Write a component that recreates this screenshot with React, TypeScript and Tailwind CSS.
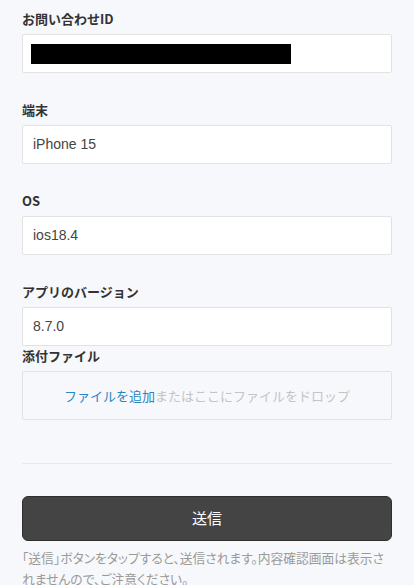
export default function App() {
  const fields = [
    { label: 'お問い合わせID', value: null },
    { label: '端末', value: 'iPhone 15' },
    { label: 'OS', value: 'ios18.4' },
  ]

  return (
    <div
      className="min-h-[585px] bg-[#f7f8fb] px-[22px] pt-[10px] text-[#333]"
      style={{ fontFamily: '"Noto Sans CJK JP", "Liberation Sans", sans-serif' }}
    >
      {fields.map((f) => (
        <div key={f.label} className="mb-[28px]">
          <p className="h-[18px] text-[13px] leading-[18px] font-bold text-[#333] mb-[6px]">{f.label}</p>
          <div className="h-[39px] bg-white border border-[#e2e2e2] rounded-[2px] flex items-center px-[10px]">
            {f.value === null ? (
              <div className="h-[20px] w-[260px] bg-black -ml-[2px]" />
            ) : (
              <span className="text-[14px] text-[#444]" style={{ fontFamily: '"Liberation Sans", "Noto Sans CJK JP", sans-serif' }}>
                {f.value}
              </span>
            )}
          </div>
        </div>
      ))}

      <p className="h-[18px] text-[13px] leading-[18px] font-bold mb-[6px]">アプリのバージョン</p>
      <div className="h-[39px] bg-white border border-[#e2e2e2] rounded-[2px] flex items-center px-[10px]">
        <span className="text-[14px] text-[#444]" style={{ fontFamily: '"Liberation Sans", "Noto Sans CJK JP", sans-serif' }}>
          8.7.0
        </span>
      </div>

      <p className="h-[18px] mt-[1px] text-[13px] leading-[18px] font-bold mb-[6px]">添付ファイル</p>
      <div className="h-[49px] border border-[#e2e2e2] rounded-[2px] flex items-center justify-center text-[13px]">
        <span className="text-[#2b86bf]">ファイルを追加</span>
        <span className="text-[#c4c4c4]">またはここにファイルをドロップ</span>
      </div>

      <div className="mt-[43px] h-px bg-[#e9e9ec]" />

      <button className="mt-[32px] w-full h-[45px] rounded-[6px] bg-[#444444] border border-[#2f2f2f] text-white text-[15px]">
        送信
      </button>

      <p
        className="mt-[6px] text-[12.75px] leading-[21px] text-[#9a9a9a] whitespace-nowrap"
        style={{ fontFeatureSettings: '"palt"' }}
      >
        「送信」ボタンをタップすると、送信されます。内容確認画面は表示さ
        <br />
        れませんので、ご注意ください。
      </p>
    </div>
  )
}
